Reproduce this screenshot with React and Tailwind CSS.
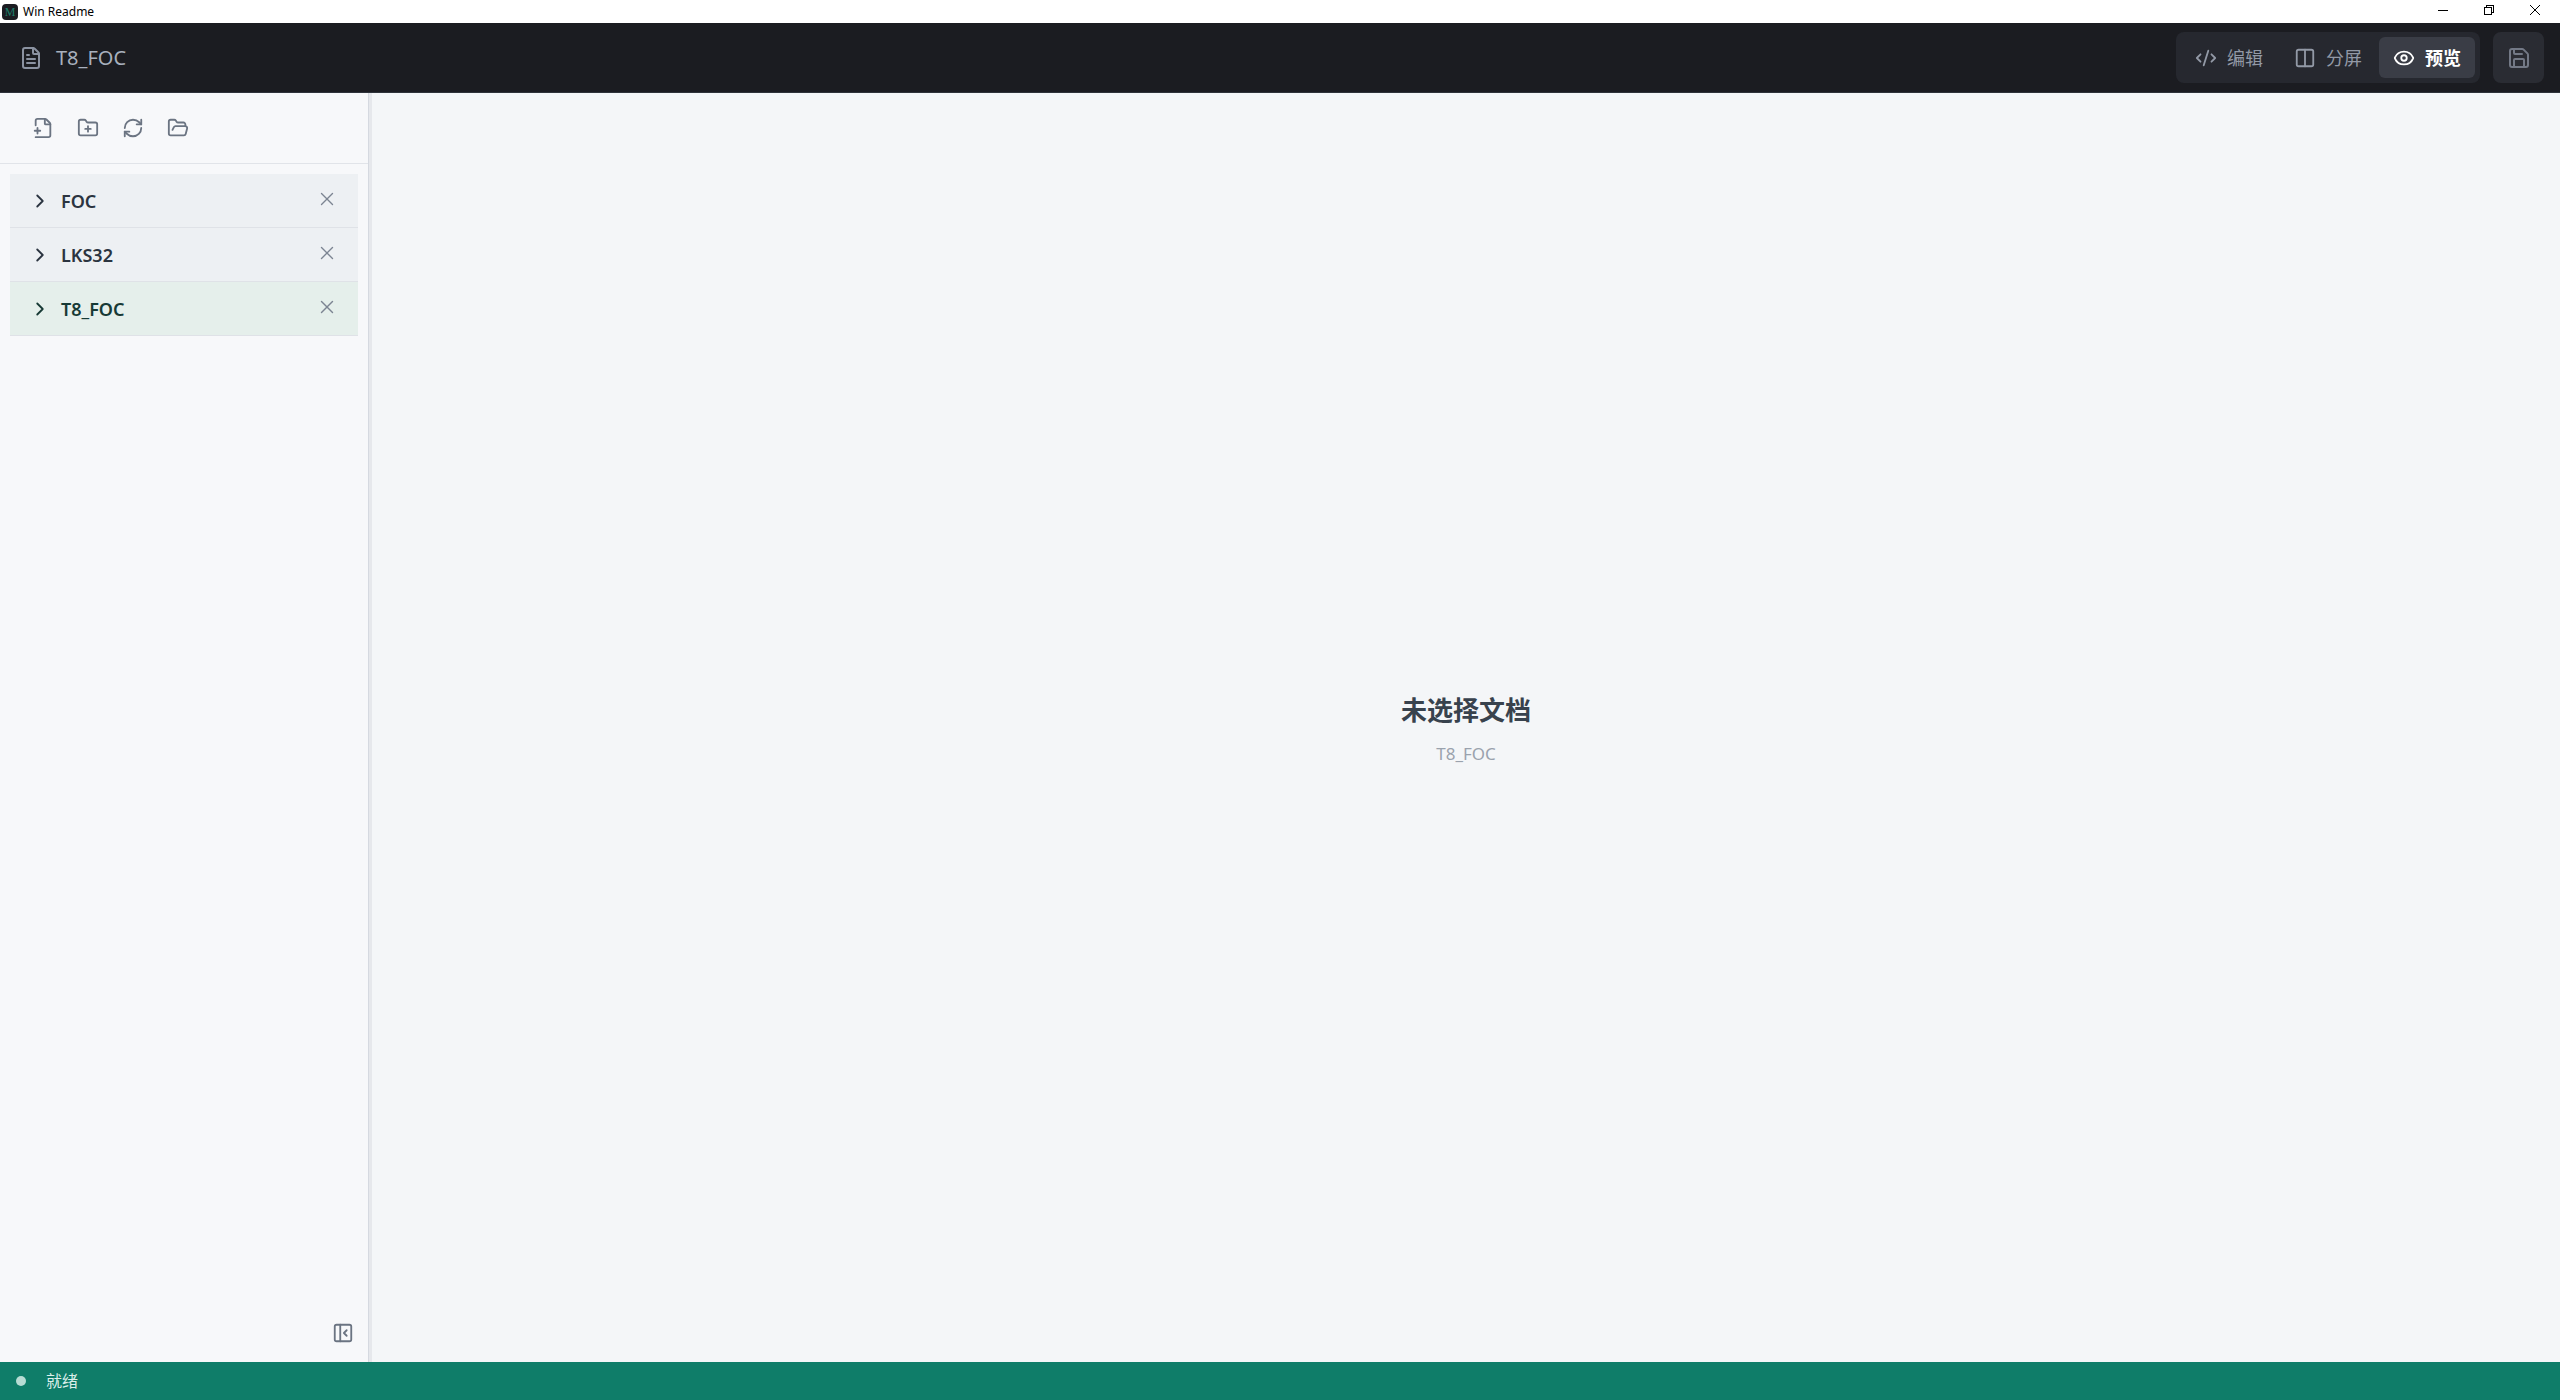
import React from "react";
import {
  CodeXml,
  Columns2,
  Eye,
  Save,
  FileText,
  FolderPlus,
  FolderOpen,
  RefreshCw,
  ChevronRight,
  PanelLeftClose,
  X,
} from "lucide-react";

function FilePlusIcon() {
  return (
    <svg width="22" height="22" viewBox="0 0 24 24" fill="none" stroke="currentColor" strokeWidth="2" strokeLinecap="round" strokeLinejoin="round" aria-hidden="true">
      <path d="M4 22h14a2 2 0 0 0 2-2V8a2.4 2.4 0 0 0-.706-1.706l-3.588-3.588A2.4 2.4 0 0 0 14 2H6a2 2 0 0 0-2 2v5" />
      <path d="M14 2v5a1 1 0 0 0 1 1h5" />
      <path d="M3 15h6" />
      <path d="M6 12v6" />
    </svg>
  );
}

function TitleBar() {
  const button = "flex h-full w-[46px] items-center justify-center text-black";
  return (
    <div className="flex h-[23px] items-center bg-white pl-0.5 text-black">
      <span className="flex size-4 items-center justify-center rounded bg-[#1b1c21] font-['Liberation_Serif',serif] text-xs leading-none text-[#1c7d69]">
        M
      </span>
      <span className="ml-[5px] text-xs leading-4">Win Readme</span>
      <div className="ml-auto flex h-full items-center pr-0.5 pb-[3px]">
        <button className={button} aria-label="最小化">
          <svg width="10" height="10" viewBox="0 0 10 10" stroke="currentColor" shapeRendering="crispEdges">
            <path d="M0 5.5h10" />
          </svg>
        </button>
        <button className={button} aria-label="还原">
          <svg width="10" height="10" viewBox="0 0 10 10" fill="none" stroke="currentColor" shapeRendering="crispEdges">
            <path d="M.5 2.5h7v7h-7zM2.5 2.5v-2h7v7h-2" />
          </svg>
        </button>
        <button className={button} aria-label="关闭">
          <svg width="10" height="10" viewBox="0 0 10 10" stroke="currentColor">
            <path d="M0 0l10 10M10 0L0 10" />
          </svg>
        </button>
      </div>
    </div>
  );
}

function ModeButton({ icon: Icon, label, active }) {
  return (
    <button
      aria-pressed={active}
      className={
        "flex h-[41px] items-center gap-2.5 rounded-md px-3.5 text-lg leading-6 " +
        (active ? "bg-[#3a3d46] font-bold text-white" : "text-[#9299a6]")
      }
    >
      <Icon size={22} strokeWidth={2} />
      {label}
    </button>
  );
}

function Header() {
  return (
    <header className="flex h-[70px] items-center border-b border-[#2f333b] bg-[#1b1c21] pr-4 pl-[19px]">
      <FileText size={24} strokeWidth={2} className="text-[#8b92a1]" />
      <h1 className="ml-[13px] text-xl leading-7 text-[#a8b0bd]">T8_FOC</h1>
      <div className="ml-auto flex h-[51px] items-center gap-[3px] rounded-lg bg-[#26282f] px-[5px]">
        <ModeButton icon={CodeXml} label="编辑" active={false} />
        <ModeButton icon={Columns2} label="分屏" active={false} />
        <ModeButton icon={Eye} label="预览" active={true} />
      </div>
      <button aria-label="保存" className="ml-[13px] flex size-[51px] items-center justify-center rounded-lg bg-[#2a2c33] text-[#737986]">
        <Save size={24} strokeWidth={2} />
      </button>
    </header>
  );
}

function FolderRow({ name, active }) {
  return (
    <li
      className={
        "flex h-[54px] items-center border-b border-[#dfe2e7] pr-5 pl-[19px] " +
        (active ? "bg-[#e5efeb] text-[#183a36]" : "bg-[#edf0f3] text-[#2b3440]")
      }
    >
      <button className="flex flex-1 items-center gap-2.5 text-left text-lg leading-6 font-semibold">
        <ChevronRight size={22} strokeWidth={2} />
        {name}
      </button>
      <button aria-label={"关闭 " + name} className="mb-1 flex size-[22px] items-center justify-center text-[#7c8492]">
        <X size={22} strokeWidth={1.5} />
      </button>
    </li>
  );
}

function Sidebar() {
  return (
    <aside className="flex w-[369px] shrink-0 flex-col border-r border-[#d5d9e0] bg-[#f7f8fa] text-[#6b7482]">
      <div className="flex h-[71px] items-center gap-[23px] border-b border-[#e1e4e9] pl-8">
        <button aria-label="新建文件"><FilePlusIcon /></button>
        <button aria-label="新建文件夹"><FolderPlus size={22} strokeWidth={2} /></button>
        <button aria-label="刷新"><RefreshCw size={22} strokeWidth={2} /></button>
        <button aria-label="打开文件夹"><FolderOpen size={22} strokeWidth={2} /></button>
      </div>
      <ul className="px-2.5 pt-2.5">
        <FolderRow name="FOC" active={false} />
        <FolderRow name="LKS32" active={false} />
        <FolderRow name="T8_FOC" active={true} />
      </ul>
      <div className="mt-auto flex justify-end pr-3.5 pb-[18px]">
        <button aria-label="收起侧栏"><PanelLeftClose size={22} strokeWidth={2} /></button>
      </div>
    </aside>
  );
}

export default function App() {
  return (
    <div className="flex h-screen flex-col font-['Noto_Sans','Noto_Sans_CJK_SC',sans-serif]">
      <TitleBar />
      <Header />
      <div className="flex min-h-0 flex-1">
        <Sidebar />
        <div className="w-[3px] shrink-0 bg-[#e6e8ec]" />
        <main className="flex flex-1 flex-col items-center justify-center gap-2.5 bg-[#f4f6f8] pt-0.5">
          <h2 className="text-[26px] leading-10 font-bold text-[#38424d]">未选择文档</h2>
          <p className="text-[17px] leading-7 text-[#9aa2ad]">T8_FOC</p>
        </main>
      </div>
      <footer className="flex h-[38px] items-center gap-5 bg-[#0f7d69] pl-4 text-base leading-6 text-[#dcefeb]">
        <span className="size-2.5 rounded-full bg-[#b7dcd4]" />
        就绪
      </footer>
    </div>
  );
}
